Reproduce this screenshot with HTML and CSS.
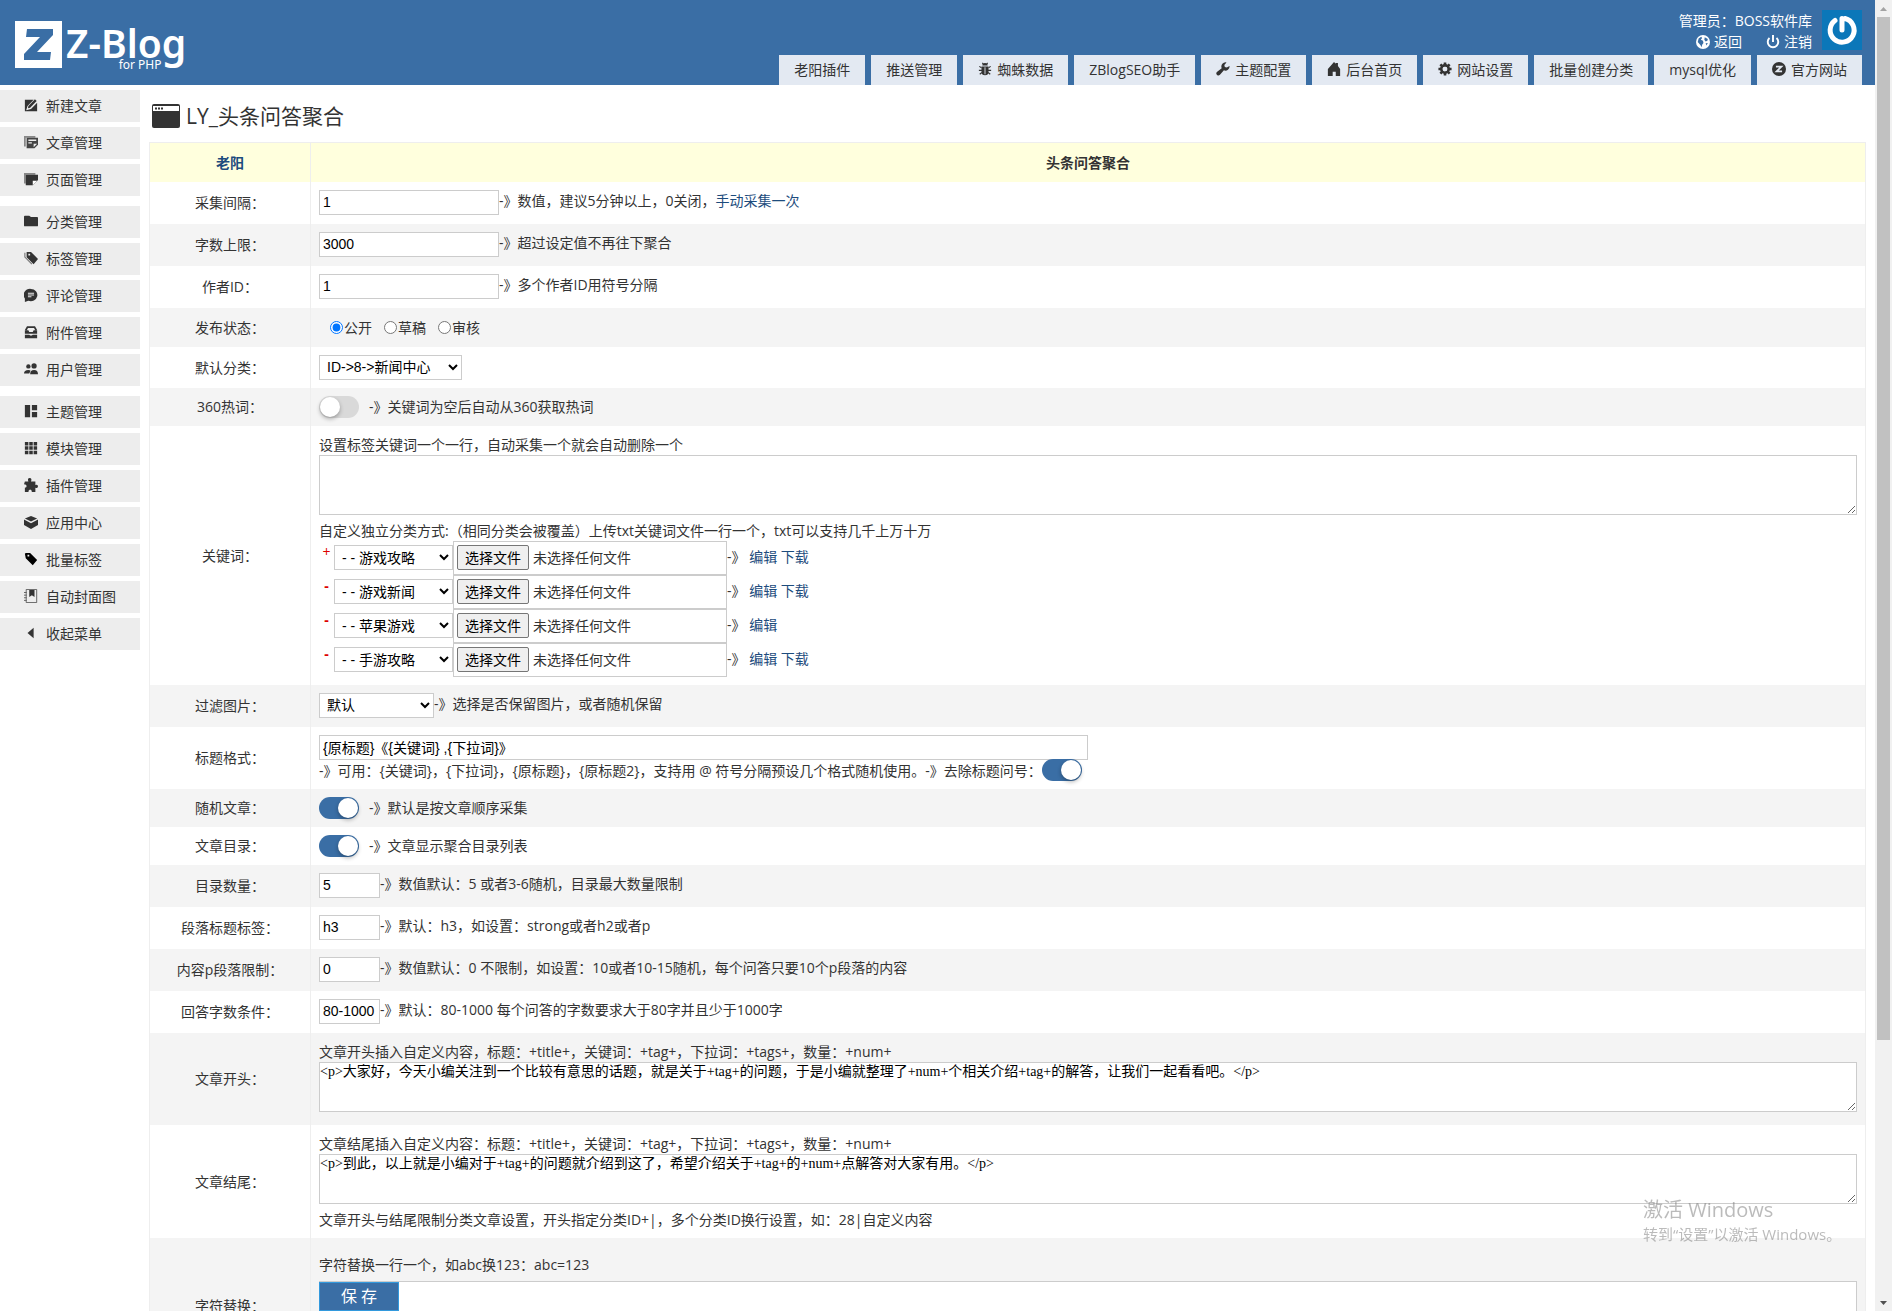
FILE: index.html
```html
<!DOCTYPE html>
<html lang="zh-CN">
<head>
    <meta charset="UTF-8">
    <meta name="viewport" content="width=device-width, initial-scale=1.0">
    <title>LY_头条问答聚合</title>
    <link rel="stylesheet" href="styles.css">
</head>
<body>

<div class="page">

<!-- Header -->
<header class="header">
    <a class="logo" href="#">
        <svg class="logo-mark" viewBox="0 0 47 47"><path fill="#fff" d="M0 0h47v47H0z"/><path fill="#3a6ea5" d="M12 8h26v6L22 31h14l-1 8H9v-6l16-17H11z"/></svg>
        <span class="logo-text">Z-Blog<small>for PHP</small></span>
    </a>
    <div class="header-right">
        <div class="user">
            <div class="user-info">
                <div>管理员：BOSS软件库</div>
                <div class="user-links">
                    <a href="#"><svg class="icon" viewBox="0 0 16 16"><circle cx="8" cy="8" r="8" fill="#fff"/><path fill="#3a6ea5" d="M3 4l3-2 1 1.500-1.500 2L8 6.500 8.500 9 7 11l-.5 3L5 11.500 2 8zM10 2.500l3.500 2-.5 2-2 1-1.500-2zM11 9.500l2.500-.5-1.500 3z"/></svg>返回</a>
                    <a href="#"><svg class="icon" viewBox="0 0 16 16"><path fill="none" stroke="#fff" stroke-width="2.200" d="M4 3.500a6 6 0 1 0 8 0M8 0v8"/></svg>注销</a>
                </div>
            </div>
            <svg class="avatar" viewBox="0 0 40 40"><path fill="#0b77b9" d="M0 0h40v40H0z"/><path fill="none" stroke="#fff" stroke-width="5" stroke-linecap="round" d="M13 10.500a12 12 0 1 0 10-2M20 8.500V20"/></svg>
        </div>
        <nav class="tabs">
            <a href="#">老阳插件</a>
            <a href="#">推送管理</a>
            <a href="#"><svg class="icon" viewBox="0 0 16 16"><path d="M5 4a3 3 0 0 1 6 0zM4 5h8v6a4 4 0 0 1-8 0z"/><path fill="none" stroke="#333" stroke-width="1.300" d="M5 1l1.500 2M11 1L9.500 3M1.500 5L4 6.500M14.500 5L12 6.500M1 9.500h14M2 14l2.500-2M14 14l-2.500-2"/><path stroke="#e3e9f2" d="M8 6v8"/></svg>蜘蛛数据</a>
            <a href="#">ZBlogSEO助手</a>
            <a href="#"><svg class="icon" viewBox="0 0 16 16"><path d="M15.500 4.500A4.800 4.800 0 0 1 9 9.500l-4.500 5A2.300 2.300 0 0 1 1 11.500L6.500 7A4.800 4.800 0 0 1 12 .5L9.500 3.500l.6 2.200 2.200.5z"/></svg>主题配置</a>
            <a href="#"><svg class="icon" viewBox="0 0 16 16"><path d="M8 0l2 2V1h2.500v3.500L15 8v8H10v-5H6.500v5H1V8z"/></svg>后台首页</a>
            <a href="#"><svg class="icon" viewBox="0 0 16 16"><circle cx="8" cy="8" r="4.200" fill="none" stroke="#333" stroke-width="3"/><path stroke="#333" stroke-width="3" d="M8 .5v3M8 12.500v3M.5 8h3M12.500 8h3M2.700 2.700l2 2M11.300 11.300l2 2M2.700 13.300l2-2M11.300 4.700l2-2"/><circle cx="8" cy="8" r="2.600" fill="#e3e9f2"/></svg>网站设置</a>
            <a href="#">批量创建分类</a>
            <a href="#">mysql优化</a>
            <a href="#"><svg class="icon" viewBox="0 0 16 16"><circle cx="8" cy="8" r="8"/><path fill="none" stroke="#e3e9f2" stroke-width="2" d="M4.500 5.200h6.300l-5.600 5.600h6.300"/></svg>官方网站</a>
        </nav>
    </div>
</header>

<div class="wrap">

<!-- Left menu -->
<aside class="sidebar">
    <ul>
        <li><a href="#"><svg class="icon" viewBox="0 0 16 16"><path d="M1 2h10L4 9l-1.500 5L8 12.500l7-7V15H1z"/><path d="M5 9l7.500-7.500 2 2L7 11l-2.500.6z"/></svg>新建文章</a></li>
        <li><a href="#"><svg class="icon" viewBox="0 0 16 16"><path fill="#888" d="M0 1h13v2H2v10H0z"/><path fill="#444" d="M3 3h13v8l-4 4H3z"/><path stroke="#ededed" stroke-width="1.500" d="M5 6h9M5 9h4"/><path fill="#ededed" d="M11 10h4l-4 4z"/></svg>文章管理</a></li>
        <li><a href="#"><svg class="icon" viewBox="0 0 16 16"><path fill="#888" d="M0 1h13v2H2v10H0z"/><path d="M2 3h14v6l-6 6H2z"/><path fill="#fff" d="M10 10h5l-5 5z"/></svg>页面管理</a></li>
    </ul>
    <ul>
        <li><a href="#"><svg class="icon" viewBox="0 0 16 16"><path d="M0 3q0-1 1-1h5l2 1.500h7q1 0 1 1V13q0 1-1 1H1q-1 0-1-1z"/></svg>分类管理</a></li>
        <li><a href="#"><svg class="icon" viewBox="0 0 16 16"><path fill="none" stroke="#777" stroke-width="1.300" d="M1 2v5l8 8"/><path fill-rule="evenodd" d="M3 1h5l8 8-5 6-8-8zM5 3v2h2V3z"/></svg>标签管理</a></li>
        <li><a href="#"><svg class="icon" viewBox="0 0 16 16"><path d="M8 1a7.500 7 0 1 1-3 13.500L1 16v-4A7.500 7 0 0 1 8 1z"/><path stroke="#ededed" stroke-width="1.200" d="M4.500 6h7M4.500 8h7M4.500 10h4"/></svg>评论管理</a></li>
        <li><a href="#"><svg class="icon" viewBox="0 0 16 16"><path fill="none" stroke="#333" stroke-width="2" d="M2 6l2-3.500h8L14 6"/><path d="M1 6h4l1 2h4l1-2h4v4H1zM1 11h5l1 1h2l1-1h5v4H1z"/></svg>附件管理</a></li>
        <li><a href="#"><svg class="icon" viewBox="0 0 16 16"><circle cx="5" cy="5" r="2.500"/><circle cx="11.500" cy="4.500" r="3"/><path d="M0 13q0-4 5-4 2 0 2.500 1L6 13zM7 14q0-5 4.500-5T16 14z"/></svg>用户管理</a></li>
    </ul>
    <ul>
        <li><a href="#"><svg class="icon" viewBox="0 0 16 16"><path d="M1 1h6v14H1zM9 1h6v6H9zM9 9h6v6H9z"/></svg>主题管理</a></li>
        <li><a href="#"><svg class="icon" viewBox="0 0 16 16"><path d="M1 1h4v4H1zM6 1h4v4H6zM11 1h4v4h-4zM1 6h4v4H1zM6 6h4v4H6zM11 6h4v4h-4zM1 11h4v4H1zM6 11h4v4H6zM11 11h4v4h-4z"/></svg>模块管理</a></li>
        <li><a href="#"><svg class="icon" viewBox="0 0 16 16"><path d="M1 4h4q-1.500-4 1.500-4T8 4h5v4q3-1 3 1.500T13 11v5H9q0-3-2-3t-2 3H1v-5q2 0 2-2T0 7z"/></svg>插件管理</a></li>
        <li><a href="#"><svg class="icon" viewBox="0 0 16 16"><path d="M8 1l7 3-7 3.500L1 4zM0 5l8 4.500L16 5v6.500L8 16l-8-4.500z"/></svg>应用中心</a></li>
        <li><a href="#"><svg class="icon" viewBox="0 0 16 16"><path fill="#000" fill-rule="evenodd" d="M1 2l1-1h5l8 8-5 6-8-8zM4 3v2h2V3z"/></svg>批量标签</a></li>
        <li><a href="#"><svg class="icon" viewBox="0 0 16 16"><path fill="none" stroke="#555" d="M2.500.5h12v15h-12zM0 4h3M0 7h3M0 10h3M0 13h3"/><path d="M6 1h6v8L9 7 6 9z"/></svg>自动封面图</a></li>
        <li><a href="#"><svg class="icon" viewBox="0 0 16 16"><path d="M11 2v12L4 8z"/></svg>收起菜单</a></li>
    </ul>
</aside>

<!-- Settings -->
<main class="main">
    <h1><svg class="title-icon" viewBox="0 0 28 24"><rect width="28" height="24" rx="2" fill="#333"/><path fill="#fff" d="M1 2h26v5H1z"/><path stroke="#333" stroke-width="2" stroke-dasharray="2 1" d="M3 4.500h8"/></svg>LY_头条问答聚合</h1>

    <form onsubmit="return false;">
    <table class="settings">
        <thead>
            <tr><th class="name"><a href="#">老阳</a></th><th>头条问答聚合</th></tr>
        </thead>
        <tbody>
            <tr>
                <td><label for="interval">采集间隔：</label></td>
                <td><div class="line line-text"><input type="text" id="interval" class="text" value="1">-》数值，建议5分钟以上，0关闭，<a href="#">手动采集一次</a></div></td>
            </tr>
            <tr>
                <td><label for="maxWords">字数上限：</label></td>
                <td><div class="line line-text"><input type="text" id="maxWords" class="text" value="3000">-》超过设定值不再往下聚合</div></td>
            </tr>
            <tr>
                <td><label for="authorId">作者ID：</label></td>
                <td><div class="line line-text"><input type="text" id="authorId" class="text" value="1">-》多个作者ID用符号分隔</div></td>
            </tr>
            <tr>
                <td>发布状态：</td>
                <td><div class="line radios">
                    <label><input type="radio" name="status" checked>公开</label>
                    <label><input type="radio" name="status">草稿</label>
                    <label><input type="radio" name="status">审核</label>
                </div></td>
            </tr>
            <tr>
                <td><label for="category">默认分类：</label></td>
                <td><div class="line"><select id="category" class="select-category"><option>ID-&gt;8-&gt;新闻中心</option></select></div></td>
            </tr>
            <tr>
                <td><label for="hot">360热词：</label></td>
                <td><div class="line line-switch"><input type="checkbox" id="hot" class="switch">-》关键词为空后自动从360获取热词</div></td>
            </tr>
            <tr>
                <td><label for="keywords">关键词：</label></td>
                <td>
                    <p>设置标签关键词一个一行，自动采集一个就会自动删除一个</p>
                    <textarea id="keywords" class="tall"></textarea>
                    <p>自定义独立分类方式:（相同分类会被覆盖）上传txt关键词文件一行一个，txt可以支持几千上万十万</p>
                    <div class="upload">
                        <button type="button" class="sign">+</button>
                        <select aria-label="分类"><option>- - 游戏攻略</option></select>
                        <label class="file"><input type="file"><span class="file-button">选择文件</span>未选择任何文件</label>
                        <span class="links">-》 <a href="#">编辑</a> <a href="#">下载</a></span>
                    </div>
                    <div class="upload">
                        <button type="button" class="sign minus">-</button>
                        <select aria-label="分类"><option>- - 游戏新闻</option></select>
                        <label class="file"><input type="file"><span class="file-button">选择文件</span>未选择任何文件</label>
                        <span class="links">-》 <a href="#">编辑</a> <a href="#">下载</a></span>
                    </div>
                    <div class="upload">
                        <button type="button" class="sign minus">-</button>
                        <select aria-label="分类"><option>- - 苹果游戏</option></select>
                        <label class="file"><input type="file"><span class="file-button">选择文件</span>未选择任何文件</label>
                        <span class="links">-》 <a href="#">编辑</a></span>
                    </div>
                    <div class="upload">
                        <button type="button" class="sign minus">-</button>
                        <select aria-label="分类"><option>- - 手游攻略</option></select>
                        <label class="file"><input type="file"><span class="file-button">选择文件</span>未选择任何文件</label>
                        <span class="links">-》 <a href="#">编辑</a> <a href="#">下载</a></span>
                    </div>
                </td>
            </tr>
            <tr>
                <td><label for="filter">过滤图片：</label></td>
                <td><div class="line line-text"><select id="filter" class="select-filter"><option>默认</option></select>-》选择是否保留图片，或者随机保留</div></td>
            </tr>
            <tr>
                <td><label for="format">标题格式：</label></td>
                <td>
                    <input type="text" id="format" class="text wide" value="{原标题}《{关键词} ,{下拉词}》">
                    <div class="line line-format"><label for="noMark">-》可用：{关键词}，{下拉词}，{原标题}，{原标题2}，支持用 @ 符号分隔预设几个格式随机使用。-》去除标题问号：</label><input type="checkbox" id="noMark" class="switch" checked></div>
                </td>
            </tr>
            <tr>
                <td><label for="random">随机文章：</label></td>
                <td><div class="line line-switch"><input type="checkbox" id="random" class="switch" checked>-》默认是按文章顺序采集</div></td>
            </tr>
            <tr>
                <td><label for="toc">文章目录：</label></td>
                <td><div class="line line-switch"><input type="checkbox" id="toc" class="switch" checked>-》文章显示聚合目录列表</div></td>
            </tr>
            <tr>
                <td><label for="tocNum">目录数量：</label></td>
                <td><div class="line line-text"><input type="text" id="tocNum" class="text short" value="5">-》数值默认：5 或者3-6随机，目录最大数量限制</div></td>
            </tr>
            <tr>
                <td><label for="tag">段落标题标签：</label></td>
                <td><div class="line line-text"><input type="text" id="tag" class="text short" value="h3">-》默认：h3，如设置：strong或者h2或者p</div></td>
            </tr>
            <tr>
                <td><label for="limit">内容p段落限制：</label></td>
                <td><div class="line line-text"><input type="text" id="limit" class="text short" value="0">-》数值默认：0 不限制，如设置：10或者10-15随机，每个问答只要10个p段落的内容</div></td>
            </tr>
            <tr>
                <td><label for="words">回答字数条件：</label></td>
                <td><div class="line line-text"><input type="text" id="words" class="text short" value="80-1000">-》默认：80-1000 每个问答的字数要求大于80字并且少于1000字</div></td>
            </tr>
            <tr>
                <td><label for="start">文章开头：</label></td>
                <td>
                    <p>文章开头插入自定义内容，标题：+title+，关键词：+tag+，下拉词：+tags+，数量：+num+</p>
                    <textarea id="start">&lt;p&gt;大家好，今天小编关注到一个比较有意思的话题，就是关于+tag+的问题，于是小编就整理了+num+个相关介绍+tag+的解答，让我们一起看看吧。&lt;/p&gt;</textarea>
                </td>
            </tr>
            <tr>
                <td><label for="end">文章结尾：</label></td>
                <td>
                    <p>文章结尾插入自定义内容：标题：+title+，关键词：+tag+，下拉词：+tags+，数量：+num+</p>
                    <textarea id="end">&lt;p&gt;到此，以上就是小编对于+tag+的问题就介绍到这了，希望介绍关于+tag+的+num+点解答对大家有用。&lt;/p&gt;</textarea>
                    <p>文章开头与结尾限制分类文章设置，开头指定分类ID+|，多个分类ID换行设置，如：28|自定义内容</p>
                </td>
            </tr>
            <tr>
                <td><label for="replace">字符替换：</label></td>
                <td>
                    <p class="spaced">字符替换一行一个，如abc换123：abc=123</p>
                    <textarea id="replace" class="tallest"></textarea>
                </td>
            </tr>
        </tbody>
    </table>
    <button type="submit" class="save">保 存</button>
    </form>
</main>

</div>
</div>

<!-- Scroll bar -->
<div class="scrollbar">
    <span class="arrow up"></span>
    <span class="thumb"></span>
    <span class="arrow down"></span>
</div>

<div class="activate">
    <div class="activate-title">激活 Windows</div>
    <div>转到“设置”以激活 Windows。</div>
</div>

</body>
</html>
```
FILE: styles.css
```css
* {
    box-sizing: border-box;
}

body {
    margin: 0;
    display: flex;
    height: 100vh;
    overflow: hidden;
    background-color: white;
    color: #333;
    font-family: "Open Sans", "Noto Sans CJK SC", sans-serif;
    font-size: 14px;
    line-height: 21px;
}

a {
    color: #1d4c7d;
    text-decoration: none;
}

p, ul, h1 {
    margin: 0;
    padding: 0;
    list-style: none;
}

.page {
    flex: 1;
    min-width: 0;
    height: 100vh;
    overflow: hidden;
}

.icon {
    width: 14px;
    height: 14px;
    flex: none;
    fill: #333;
}

/* header */

.header {
    display: flex;
    justify-content: space-between;
    height: 85px;
    padding-right: 13px;
    background-color: #3a6ea5;
}

.logo {
    display: flex;
    align-items: flex-start;
    gap: 4px;
    padding: 21px 0 0 15px;
    color: white;
}

.logo-mark {
    width: 47px;
    height: 47px;
}

.logo-text {
    display: flex;
    flex-direction: column;
    align-items: center;
    font-family: "Noto Sans", sans-serif;
    font-size: 39px;
    font-weight: 600;
    line-height: 44px;
}

.logo-text small {
    margin-top: -6px;
    padding-left: 28px;
    font-size: 12px;
    font-weight: 400;
    line-height: 12px;
}

.header-right {
    display: flex;
    flex-direction: column;
    align-items: flex-end;
    justify-content: space-between;
    padding-top: 10px;
}

.user {
    display: flex;
    gap: 10px;
    color: white;
    text-align: right;
}

.user-links {
    display: flex;
    justify-content: flex-end;
    gap: 24px;
}

.user-links a {
    display: flex;
    align-items: center;
    gap: 4px;
    color: white;
}

.avatar {
    width: 40px;
    height: 40px;
}

.tabs {
    display: flex;
    gap: 6px;
}

.tabs a {
    display: flex;
    align-items: center;
    gap: 5px;
    height: 30px;
    padding: 0 15px 2px;
    background-color: #e3e9f2;
    color: #333;
    white-space: nowrap;
}

/* left menu */

.wrap {
    display: flex;
}

.sidebar {
    display: flex;
    flex-direction: column;
    gap: 10px;
    flex: none;
    width: 140px;
    padding-top: 5px;
}

.sidebar ul {
    display: flex;
    flex-direction: column;
    gap: 5px;
}

.sidebar a {
    display: flex;
    align-items: center;
    gap: 8px;
    height: 32px;
    padding: 0 0 2px 24px;
    background-color: #ededed;
    color: #333;
}

/* settings */

.main {
    flex: 1;
    min-width: 0;
    padding: 11px 9px 0 9px;
}

h1 {
    display: flex;
    align-items: center;
    gap: 6px;
    height: 40px;
    margin-bottom: 6px;
    padding-left: 3px;
    font-size: 21px;
    font-weight: 400;
}

.title-icon {
    width: 28px;
    height: 24px;
}

.settings {
    width: 100%;
    border: 1px solid #eee;
    border-collapse: collapse;
    table-layout: fixed;
}

.settings th {
    height: 39px;
    padding: 0;
    border-left: 1px solid #eee;
    background-color: #ffffdd;
}

.settings .name {
    width: 161px;
}

.settings td {
    padding: 8px;
    border-left: 1px solid #eee;
}

.settings td:first-child {
    text-align: center;
}

.settings tbody tr:nth-child(even) {
    background-color: #f4f4f4;
}

.line {
    display: flex;
    align-items: center;
    min-height: 25px;
    white-space: pre;
}

.line-text {
    align-items: flex-start;
    min-height: 26px;
}

.line-switch {
    gap: 10px;
    min-height: 22px;
}

.line-format {
    height: 21px;
    min-height: 0;
}

.radios {
    gap: 12px;
    min-height: 23px;
    padding-left: 11px;
}

.radios label {
    display: flex;
    align-items: center;
}

.radios input {
    width: 13px;
    height: 13px;
    margin: 0 1px 0 0;
}

.text, select {
    height: 25px;
    border: 1px solid #ccc;
    border-radius: 0;
    background-color: white;
    color: black;
    font-family: "Liberation Sans", "Noto Sans CJK SC", sans-serif;
    font-size: 14px;
}

.text {
    width: 180px;
    padding: 0 3px;
}

.text.short {
    width: 61px;
}

.text.wide {
    display: block;
    width: 50%;
}

select {
    padding: 0 3px;
}

.select-category {
    width: 143px;
}

.select-filter {
    width: 115px;
}

textarea {
    display: block;
    width: 100%;
    height: 50px;
    margin-bottom: 5px;
    padding: 0;
    border: 1px solid #ccc;
    color: black;
    font-family: "Liberation Serif", "Noto Sans CJK SC", serif;
    font-size: 14px;
    line-height: 18px;
}

textarea.tall {
    height: 60px;
}

textarea.tallest {
    height: 80px;
}

.spaced {
    padding: 8px 0 6px;
}

.switch {
    appearance: none;
    flex: none;
    display: flex;
    width: 40px;
    height: 22px;
    margin: 0;
    padding: 1px;
    border-radius: 11px;
    background-color: #d9d9d9;
}

.switch::before {
    content: "";
    width: 20px;
    height: 20px;
    border-radius: 50%;
    background-color: white;
    box-shadow: 0 2px 4px rgba(0, 0, 0, 0.3);
}

.switch:checked {
    justify-content: flex-end;
    background-color: #3a6ea5;
}

.upload {
    display: flex;
    align-items: center;
    height: 34px;
}

.upload select {
    width: 119px;
}

.upload .links {
    padding-bottom: 2px;
}

.sign {
    align-self: flex-start;
    width: 15px;
    padding: 0;
    border: 0;
    background: none;
    color: #d00;
    font-family: inherit;
    font-size: 14px;
    line-height: 22px;
}

.minus {
    font-weight: 700;
}

.file {
    display: flex;
    align-items: center;
    gap: 4px;
    width: 274px;
    height: 34px;
    padding: 0 3px;
    border: 1px solid #ccc;
    background-color: white;
}

.file input {
    display: none;
}

.file-button {
    width: 72px;
    height: 25px;
    border: 1px solid #767676;
    border-radius: 2px;
    background-color: #efefef;
    color: black;
    line-height: 23px;
    text-align: center;
}

.save {
    position: fixed;
    bottom: 0;
    width: 80px;
    height: 29px;
    margin-left: 170px;
    padding: 0 0 2px;
    border: 1px solid #3399dd;
    background-color: #3a6ea5;
    color: white;
    font-family: inherit;
    font-size: 16px;
    line-height: 24px;
}

/* scroll bar */

.scrollbar {
    display: flex;
    flex-direction: column;
    align-items: center;
    flex: none;
    width: 17px;
    background-color: #f1f1f1;
}

.thumb {
    width: 13px;
    flex: 1;
    max-height: 78%;
    margin-bottom: auto;
    background-color: #c1c1c1;
}

.arrow {
    width: 7px;
    height: 4px;
    margin: 7px 0 6px;
    background-color: #a3a3a3;
    clip-path: polygon(50% 0, 100% 100%, 0 100%);
}

.arrow.down {
    background-color: #505050;
    clip-path: polygon(0 0, 100% 0, 50% 100%);
}

.activate {
    position: fixed;
    right: 48px;
    bottom: 66px;
    width: 201px;
    color: rgba(120, 120, 120, 0.5);
    font-size: 15px;
    line-height: 22px;
    white-space: nowrap;
}

.activate-title {
    font-size: 20px;
    line-height: 26px;
}
```
